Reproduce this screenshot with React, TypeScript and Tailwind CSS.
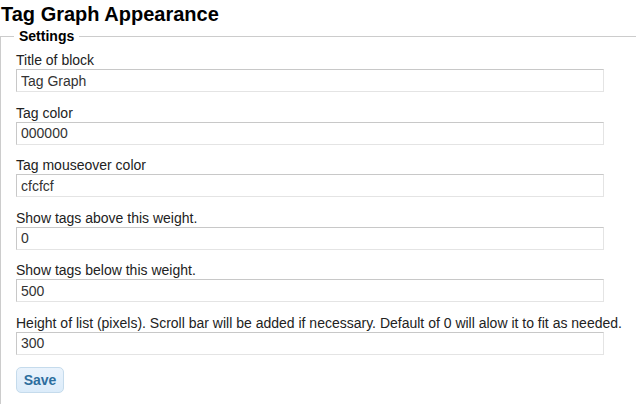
import React from "react";

const fields: { label: string; value: string }[] = [
  { label: "Title of block", value: "Tag Graph" },
  { label: "Tag color", value: "000000" },
  { label: "Tag mouseover color", value: "cfcfcf" },
  { label: "Show tags above this weight.", value: "0" },
  { label: "Show tags below this weight.", value: "500" },
  {
    label:
      "Height of list (pixels). Scroll bar will be added if necessary. Default of 0 will alow it to fit as needed.",
    value: "300",
  },
];

export default function App() {
  return (
    <div className="w-[636px] h-[404px] overflow-hidden bg-white font-['Liberation_Sans',Arial,sans-serif] text-[#222]">
      <h2 className="mt-[2px] pl-[1px] text-[20px] leading-[24px] font-bold text-black">
        Tag Graph Appearance
      </h2>
      <fieldset className="mt-[3px] w-[700px] border-0 border-t border-l border-solid border-[#cccccc] pl-[15px] pt-[8px] pb-[20px]">
        <legend className="ml-[-2px] px-[5px] text-[14px] leading-[15px] font-bold text-black">
          Settings
        </legend>
        <div className="flex flex-col w-[588px]">
          {fields.map((f) => (
            <div key={f.label} className="mb-[12.6px]">
              <label className="block text-[14px] leading-[17px] whitespace-nowrap">
                {f.label}
              </label>
              <input
                type="text"
                defaultValue={f.value}
                className="block w-[588px] h-[23px] border border-solid border-t-[#c8c8c8] border-l-[#c8c8c8] border-r-[#e4e4e4] border-b-[#e4e4e4] bg-white pl-[4px] text-[14px] text-[#333] outline-none font-['Liberation_Sans',Arial,sans-serif]"
              />
            </div>
          ))}
        </div>
        <button
          type="button"
          className="mt-[-1px] w-[48px] h-[26px] rounded-[5px] border border-[#c5dbec] bg-gradient-to-b from-[#eaf3fc] to-[#dcecfa] text-[14px] font-bold text-[#2e6e9e] leading-[24px]"
        >
          Save
        </button>
      </fieldset>
    </div>
  );
}
